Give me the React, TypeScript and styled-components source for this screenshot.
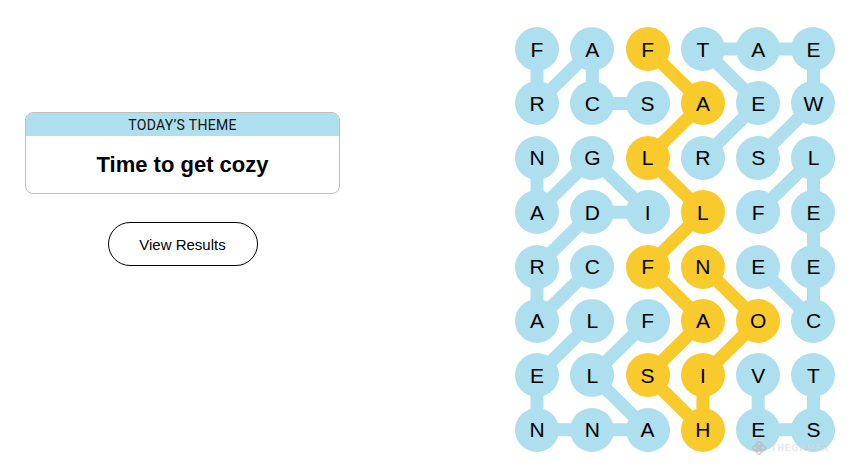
import React from "react";
import styled, { createGlobalStyle } from "styled-components";

const GlobalStyle = createGlobalStyle`
  html, body { margin: 0; padding: 0; background: #ffffff; }
  body { font-family: "Liberation Sans", Arial, sans-serif; color: #000; }
`;

const COL = 55.3;
const ROW = 54.4;
const R = 22;
const BLUE = "#aedfee";
const YELLOW = "#f8ca2c";

const letters = [
  "FAFTAE",
  "RCSAEW",
  "NGLRSL",
  "ADILFE",
  "RCFNEE",
  "ALFAOC",
  "ELSIVT",
  "NNAHES",
];

type P = [number, number];
type Word = { path: P[]; span?: boolean };

// paths as [row, col]
const words: Word[] = [
  { path: [[1, 2], [1, 1], [0, 1], [1, 0], [0, 0]] }, // SCARF
  { path: [[2, 4], [1, 5], [0, 5], [0, 4], [0, 3], [1, 4], [2, 3]] }, // SWEATER
  { path: [[4, 1], [5, 0], [4, 0], [3, 1], [3, 2], [2, 1], [3, 0], [2, 0]] }, // CARDIGAN
  { path: [[3, 4], [2, 5], [3, 5], [4, 5], [5, 5], [4, 4]] }, // FLEECE
  { path: [[5, 2], [6, 1], [7, 2], [7, 1], [7, 0], [6, 0], [5, 1]] }, // FLANNEL
  { path: [[6, 4], [7, 4], [7, 5], [6, 5]] }, // VEST
  {
    span: true,
    path: [[0, 2], [1, 3], [2, 2], [3, 3], [4, 2], [5, 3], [6, 2], [7, 3], [6, 3], [5, 4], [4, 3]],
  }, // FALLFASHION
];

const colorAt = (r: number, c: number): "blue" | "yellow" => {
  for (const w of words) {
    if (w.path.some(([pr, pc]) => pr === r && pc === c)) return w.span ? "yellow" : "blue";
  }
  return "blue";
};

const Page = styled.main`
  display: flex;
  align-items: flex-start;
  width: 859px;
  height: 473px;
  overflow: hidden;
  position: relative;
`;

const LeftColumn = styled.section`
  width: 315px;
  margin-left: 25px;
  margin-top: 112px;
  display: flex;
  flex-direction: column;
  align-items: center;
`;

const ThemeCard = styled.div`
  width: 100%;
  box-sizing: border-box;
  border: 1px solid #bfbfbf;
  border-radius: 8px;
  overflow: hidden;
  display: flex;
  flex-direction: column;
`;

const ThemeHeader = styled.div`
  background: ${BLUE};
  height: 23px;
  display: flex;
  align-items: center;
  justify-content: center;
  font-family: Roboto, "Liberation Sans", sans-serif;
  font-size: 14px;
  font-weight: 400;
  letter-spacing: 0.3px;
  color: #121212;
  text-transform: uppercase;
`;

const ThemeBody = styled.div`
  height: 57px;
  display: flex;
  align-items: center;
  justify-content: center;
  font-size: 22px;
  font-weight: 700;
  color: #000;
`;

const ResultsButton = styled.button`
  margin-top: 28px;
  width: 150px;
  height: 44px;
  border: 1px solid #000;
  border-radius: 22px;
  background: #fff;
  font-family: "Liberation Sans", Arial, sans-serif;
  font-size: 15px;
  color: #000;
  cursor: pointer;
`;

const Board = styled.div`
  position: relative;
  margin-left: 175px;
  margin-top: 27px;
  display: grid;
  grid-template-columns: repeat(6, ${R * 2}px);
  grid-auto-rows: ${R * 2}px;
  column-gap: ${COL - R * 2}px;
  row-gap: ${ROW - R * 2}px;
`;

const Lines = styled.svg`
  position: absolute;
  left: 0;
  top: 0;
  overflow: visible;
  pointer-events: none;
  z-index: 0;
`;

const Tile = styled.div<{ $tone: "blue" | "yellow" }>`
  position: relative;
  z-index: 1;
  width: ${R * 2}px;
  height: ${R * 2}px;
  border-radius: 50%;
  background: ${(p) => (p.$tone === "yellow" ? YELLOW : BLUE)};
  display: flex;
  align-items: center;
  justify-content: center;
  font-size: 21px;
  color: #000;
  line-height: 1;
`;

const Watermark = styled.div`
  position: absolute;
  left: 752px;
  top: 441px;
  display: flex;
  align-items: center;
  gap: 3px;
  opacity: 0.6;
  z-index: 2;
  font-family: "DejaVu Sans", sans-serif;
  font-size: 8.5px;
  line-height: 1;
  letter-spacing: 1.3px;
  color: #e2e2e2;
  text-shadow: 0 0 1px #b5b5b5;
`;

const cx = (c: number) => R + c * COL;
const cy = (r: number) => R + r * ROW;

export default function App() {
  return (
    <>
      <GlobalStyle />
      <Page>
        <LeftColumn>
          <ThemeCard>
            <ThemeHeader>Today’s Theme</ThemeHeader>
            <ThemeBody>Time to get cozy</ThemeBody>
          </ThemeCard>
          <ResultsButton>View Results</ResultsButton>
        </LeftColumn>
        <Board>
          <Lines width={COL * 5 + R * 2} height={ROW * 7 + R * 2}>
            {words.map((w, i) => (
              <polyline
                key={i}
                points={w.path.map(([r, c]) => `${cx(c)},${cy(r)}`).join(" ")}
                fill="none"
                stroke={w.span ? YELLOW : BLUE}
                strokeWidth={13}
                strokeLinejoin="round"
                strokeLinecap="round"
              />
            ))}
          </Lines>
          {letters.map((row, r) =>
            row.split("").map((ch, c) => (
              <Tile key={`${r}-${c}`} $tone={colorAt(r, c)}>
                {ch}
              </Tile>
            ))
          )}
        </Board>
        <Watermark>
          <svg width="16" height="14" viewBox="0 0 16 14">
            <g fill="none" stroke="#c9a9a9" strokeWidth="1.6">
              <rect x="5" y="0.8" width="4" height="4" transform="rotate(45 7 2.8)" />
              <rect x="1" y="5" width="4" height="4" transform="rotate(45 3 7)" />
              <rect x="9" y="5" width="4" height="4" transform="rotate(45 11 7)" />
              <rect x="5" y="9" width="4" height="4" transform="rotate(45 7 11)" />
            </g>
          </svg>
          <span>THEGAMER</span>
        </Watermark>
      </Page>
    </>
  );
}
